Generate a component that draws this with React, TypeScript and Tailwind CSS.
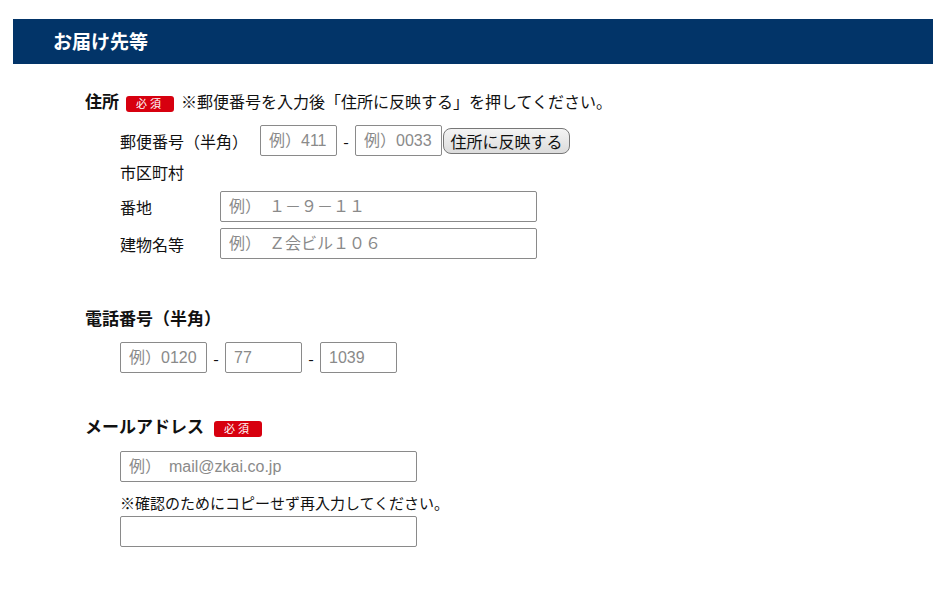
import React from "react";

const jp = { fontFamily: '"Noto Sans CJK JP", "Noto Sans", sans-serif' };

function Badge() {
  return (
    <span className="inline-flex h-[16px] w-[48px] items-center justify-center rounded-[3px] bg-[#d7000f] text-[11px] leading-none tracking-[3px] text-white">
      必須
    </span>
  );
}

function Input({ w, ph }: { w: string; ph?: string }) {
  return (
    <input
      className={`${w} h-[31px] shrink-0 rounded-[2px] border border-[#8a8a8a] bg-white px-[8px] text-[16px] text-[#333] placeholder:text-[#8a8a8a] outline-none`}
      placeholder={ph}
      style={{ fontFamily: '"Liberation Sans", "Noto Sans CJK JP", sans-serif' }}
    />
  );
}

export default function App() {
  return (
    <div className="min-h-[597px] w-[933px] overflow-hidden bg-white pt-[19px] text-[#111]" style={jp}>
      <div className="ml-[13px] flex h-[45px] items-center bg-[#023468] pl-[40px] text-[19px] font-bold text-white">
        お届け先等
      </div>
      <div className="pl-[85px]">
        <div className="mt-[27px] flex h-[20px] items-center text-[16px]">
          <span className="text-[17px] font-bold">住所</span>
          <span className="ml-[7px]"><Badge /></span>
          <span className="ml-[7px]">※郵便番号を入力後「住所に反映する」を押してください。</span>
        </div>
        <div className="pl-[35px] text-[16px]">
          <div className="mt-[14px] flex h-[31px] items-center">
            <span className="w-[140px]">郵便番号（半角）</span>
            <Input w="w-[77px]" ph="例）411" />
            <span className="w-[18px] text-center">-</span>
            <Input w="w-[87px]" ph="例）0033" />
            <button className="ml-[1px] h-[26px] w-[127px] rounded-[8px] border border-[#777] bg-gradient-to-b from-[#f4f4f4] to-[#dcdcdc] text-[16px] text-[#111]">
              住所に反映する
            </button>
          </div>
          <div className="mt-[6px] flex h-[20px] items-center">市区町村</div>
          <div className="mt-[9px] flex h-[31px] items-center">
            <span className="w-[100px]">番地</span>
            <Input w="w-[317px]" ph="例）　１－９－１１" />
          </div>
          <div className="mt-[6px] flex h-[31px] items-center">
            <span className="w-[100px]">建物名等</span>
            <Input w="w-[317px]" ph="例）　Ｚ会ビル１０６" />
          </div>
        </div>

        <div className="mt-[49px] flex h-[20px] items-center text-[17px] font-bold">電話番号（半角）</div>
        <div className="mt-[14px] flex h-[31px] items-center pl-[35px] text-[16px]">
          <Input w="w-[87px]" ph="例）0120" />
          <span className="w-[18px] text-center">-</span>
          <Input w="w-[77px]" ph="77" />
          <span className="w-[18px] text-center">-</span>
          <Input w="w-[77px]" ph="1039" />
        </div>

        <div className="mt-[43px] flex h-[20px] items-center">
          <span className="text-[17px] font-bold">メールアドレス</span>
          <span className="ml-[10px]"><Badge /></span>
        </div>
        <div className="pl-[35px] text-[15px]">
          <div className="mt-[15px] flex">
            <Input w="w-[297px]" ph="例）　mail@zkai.co.jp" />
          </div>
          <div className="mt-[11px] flex h-[20px] items-center">※確認のためにコピーせず再入力してください。</div>
          <div className="mt-[3px] flex">
            <Input w="w-[297px]" />
          </div>
        </div>
      </div>
    </div>
  );
}
